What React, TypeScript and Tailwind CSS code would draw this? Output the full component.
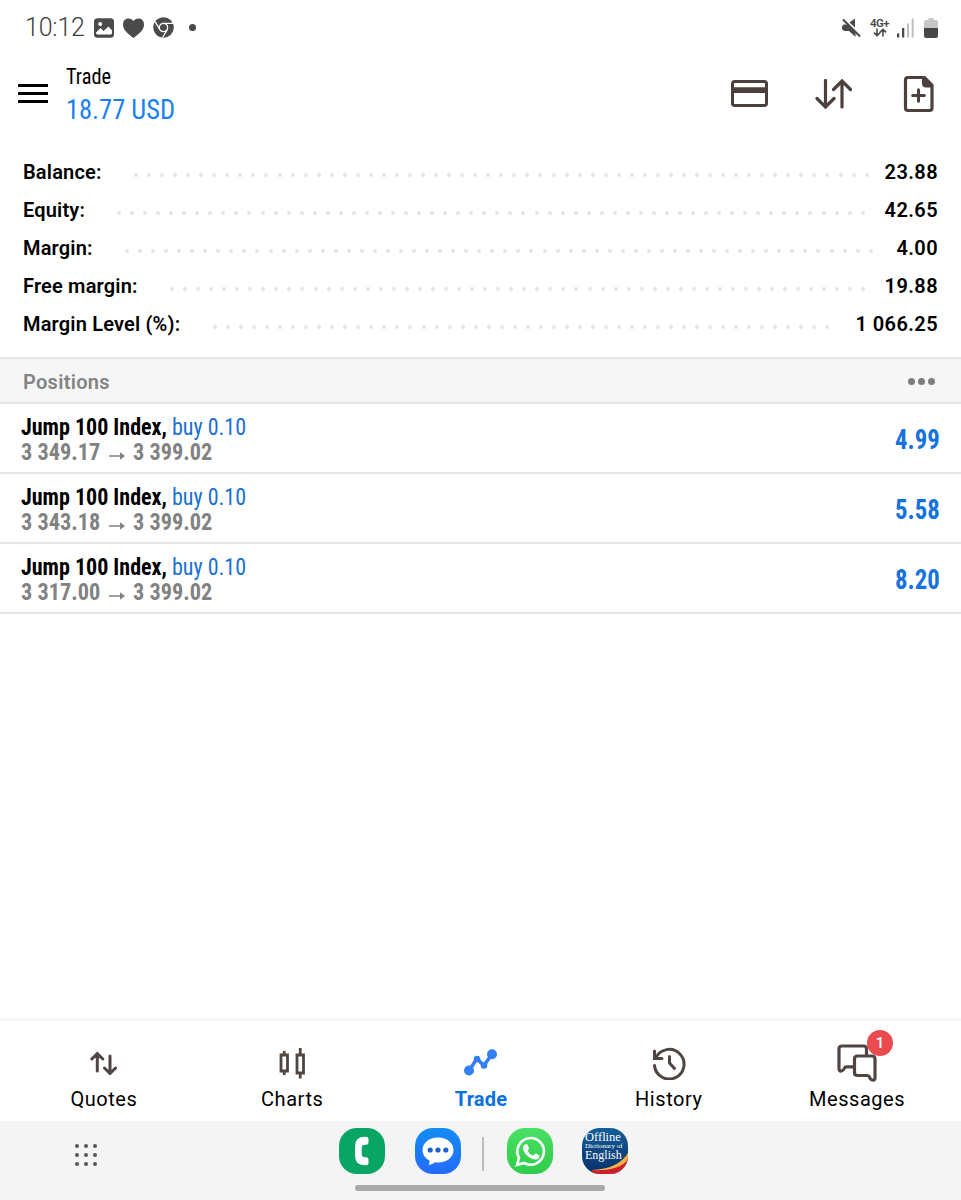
import type { ReactNode } from "react";

const condensed = "[font-family:'Roboto_Condensed',Roboto,sans-serif] [font-stretch:75%]";

const summary = [
  { label: "Balance:", value: "23.88", dots: 57, box: "ml-[134px] w-[735px]" },
  { label: "Equity:", value: "42.65", dots: 58, box: "ml-[117px] w-[748px]" },
  { label: "Margin:", value: "4.00", dots: 58, box: "ml-[125px] w-[748px]" },
  { label: "Free margin:", value: "19.88", dots: 54, box: "ml-[170px] w-[696px]" },
  { label: "Margin Level (%):", value: "1 066.25", dots: 48, box: "ml-[213px] w-[617px]" },
];

const positions = [
  { open: "3 349.17", now: "3 399.02", profit: "4.99" },
  { open: "3 343.18", now: "3 399.02", profit: "5.58" },
  { open: "3 317.00", now: "3 399.02", profit: "8.20" },
];

function StatusBar() {
  return (
    <div className="flex h-14 items-center pr-[23px] pb-px pl-[25px] text-[#4a4a4a]">
      <span className="w-[69px] text-[25px] leading-none font-light tracking-[-0.2px] text-[#404040]">10:12</span>
      <svg className="h-5 w-5" viewBox="0 0 20 20">
        <rect width="20" height="19.5" y=".2" rx="3.5" fill="currentColor" />
        <circle cx="6.2" cy="6" r="2" fill="#fff" />
        <path d="M2 14.500 6.500 10l3 3 5-4.500 3.500 4v2.500q0 1.500-1.500 1.500H4q-2 0-2-1.500Z" fill="#fff" />
      </svg>
      <svg className="ml-[9px] h-5 w-[21px]" viewBox="0 0 21 20">
        <path d="M10.5 3.2C8-1.2 0-.5 0 6.5c0 6.2 6.2 10 10.5 13.5C14.800 16.500 21 12.700 21 6.500c0-7-8-7.700-10.500-3.300Z" fill="currentColor" />
      </svg>
      <svg className="ml-[9px] h-[21px] w-[21px]" viewBox="0 0 21 21">
        <circle cx="10.500" cy="10.500" r="10.300" fill="currentColor" />
        <g fill="none" stroke="#fff" strokeWidth="1.200">
          <circle cx="10.500" cy="10.500" r="4.200" />
          <path d="M10.500 6.300H20M6.800 12.600 2 4.400M14.200 12.600 9.500 20.700" />
        </g>
      </svg>
      <span className="ml-[15px] h-[7px] w-[7px] rounded-full bg-current" />
      <div className="flex-1" />
      <svg className="h-5 w-5" viewBox="0 0 20 20">
        <path d="M1 8.500 2.500 6.500h4L14.500 14.500V19L8 13H3L1 11zM8.500 4.500 14 .5v9z" fill="currentColor" />
        <path d="m2 2.200 16.500 16.500" stroke="#fff" strokeWidth="1.300" transform="translate(1.200 -1.200)" />
        <path d="m2 1.500 17 17" stroke="currentColor" strokeWidth="2.200" />
      </svg>
      <div className="ml-[9px] flex w-[19px] flex-col items-center">
        <span className="text-[11.500px] leading-[10px] font-semibold tracking-[-0.5px]">4G+</span>
        <svg className="h-[9px] w-[14px]" viewBox="0 0 14 9">
          <path d="M4 .5v7M.9 4.600 4 7.600l3.100-3M10 8.500v-7M6.900 4.400 10 1.400l3.100 3" fill="none" stroke="currentColor" strokeWidth="1.600" />
        </svg>
      </div>
      <svg className="ml-2 h-5 w-[17px]" viewBox="0 0 17 20">
        <path d="M0 15.500h2.300v4H0zM5 10h2.300v9.500H5z" fill="currentColor" />
        <path d="M10 5.500h2v14h-2zM14.700.5h2v19h-2z" fill="#bebebe" />
      </svg>
      <svg className="ml-[10px] h-5 w-[14px]" viewBox="0 0 14 20">
        <path d="M4.500 0h5v2H12q2 0 2 2v7H0V4q0-2 2-2h2.500z" fill="#c6c6c6" />
        <path d="M0 10h14v7.500q0 2.500-2.500 2.500h-9Q0 20 0 17.500z" fill="#464646" />
      </svg>
    </div>
  );
}

function Header() {
  return (
    <header className="flex h-[76px] items-center pr-[27px] pl-[18px] text-[#4b403e]">
      <button className="-mt-[2px] flex w-[30px] flex-col gap-[5px]" aria-label="Menu">
        <span className="h-[3px] bg-black" />
        <span className="h-[3px] bg-black" />
        <span className="h-[3px] bg-black" />
      </button>
      <div className={`ml-[17.500px] ${condensed}`}>
        <div className="origin-left scale-x-[0.925] text-[22px] leading-[31px] text-black">Trade</div>
        <div className="origin-left scale-x-[0.945] text-[28px] leading-[35px] text-[#1a7ff0]">18.77 USD</div>
      </div>
      <div className="flex-1" />
      <svg className="h-[28px] w-[37px]" viewBox="0 0 37 28">
        <rect x="1.500" y="1.500" width="34" height="24" rx="2.300" fill="none" stroke="currentColor" strokeWidth="3" />
        <path d="M1 7.200h35v5.800H1z" fill="currentColor" />
      </svg>
      <svg className="ml-[47px] h-[30px] w-[37px]" viewBox="0 0 37 30">
        <path d="M10.500 1.500v26M2 19.500l8.500 8.500 8.500-8.500M27 28V2M18.500 10.500 27 2l8.500 8.500" fill="none" stroke="currentColor" strokeWidth="3.200" strokeLinecap="round" />
      </svg>
      <svg className="ml-[51px] h-[38px] w-[31px]" viewBox="0 0 31 38">
        <path d="M5 2.500h16.500l7.500 7.700V33q0 2.500-2.500 2.500H5Q2.500 35.500 2.500 33V5Q2.500 2.500 5 2.500Z" fill="none" stroke="currentColor" strokeWidth="3.200" />
        <path d="M19 2v6.500q0 4 4 4h6.500V9.500l-7.500-7.500z" fill="currentColor" />
        <path d="M15.500 14.800v11.400M9.700 20.500h11.600" stroke="currentColor" strokeWidth="3" strokeLinecap="round" />
      </svg>
    </header>
  );
}

function Summary() {
  return (
    <section className="mt-[21px] h-[204px] text-[20px] text-black">
      {summary.map((row) => (
        <div key={row.label} className="flex h-[38px] items-center pr-[23px]">
          <span className="-mr-[23px] w-0 pl-[23px] font-semibold tracking-[0.170px] whitespace-nowrap">{row.label}</span>
          <span className={`flex shrink-0 translate-y-[3px] justify-between ${row.box}`}>
            {Array.from({ length: row.dots }, (_, i) => (
              <i key={i} className="h-1 w-1 rounded-full bg-[#e4e4e4]" />
            ))}
          </span>
          <span className="flex-1 text-right font-semibold tracking-[0.4px] whitespace-nowrap">{row.value}</span>
        </div>
      ))}
    </section>
  );
}

function Positions() {
  return (
    <section>
      <div className="flex h-[47px] items-center justify-between border-t-2 border-b-2 border-[#e6e6e6] bg-[#f6f6f6] pt-[3px] pr-[26px] pl-[23px]">
        <span className="text-[20px] font-semibold tracking-[0.3px] text-[#838383]">Positions</span>
        <span className="-mt-[2px] flex gap-[3px]">
          <i className="h-[7px] w-[7px] rounded-full bg-[#7d7d7d]" />
          <i className="h-[7px] w-[7px] rounded-full bg-[#7d7d7d]" />
          <i className="h-[7px] w-[7px] rounded-full bg-[#7d7d7d]" />
        </span>
      </div>
      {positions.map((p) => (
        <div key={p.open} className={`flex h-[70px] items-center justify-between border-b-2 border-[#e6e6e6] pt-[4px] pr-[21px] pl-[21px] ${condensed}`}>
          <div className="text-[23px] leading-[26px]">
            <div className="origin-left scale-x-[0.957] pt-px font-bold text-black">
              Jump 100 Index, <span className="font-normal text-[#1870d5]">buy 0.10</span>
            </div>
            <div className="-mt-px mb-px flex font-bold text-[#828282]">
              <span className="w-[88px] origin-left scale-x-[0.970]">{p.open}</span>
              <svg className="mt-[12px] mr-2 h-2 w-4" viewBox="0 0 16 8">
                <path d="M0 4h13" stroke="currentColor" strokeWidth="1.500" />
                <path d="m11 .3 5 3.700-5 3.700z" fill="currentColor" />
              </svg>
              <span className="origin-left scale-x-[0.970]">{p.now}</span>
            </div>
          </div>
          <span className="origin-right scale-x-[0.917] text-[27px] font-bold text-[#1672dc]">{p.profit}</span>
        </div>
      ))}
    </section>
  );
}

function Tab({ label, active = false, children }: { label: string; active?: boolean; children: ReactNode }) {
  return (
    <button className="flex w-[188.300px] flex-col items-center">
      <span className="relative flex h-[61px] items-center pt-[22px]">{children}</span>
      <span className={`mt-[2px] text-[20px] leading-[30px] ${active ? "pl-px font-bold tracking-[0.200px] text-[#0b6fe4]" : "tracking-[0.550px] text-black"}`}>
        {label}
      </span>
    </button>
  );
}

function TabBar() {
  return (
    <nav className="flex h-[103px] justify-center border-t-[3px] border-[#f6f6f6] text-[#4f4644]">
      <Tab label="Quotes">
        <svg className="h-6 w-[27px]" viewBox="0 0 27 24">
          <path d="M7.300 20V2.500M1.800 8l5.500-5.500L12.800 8M20 5v17M14.500 17l5.500 5.500 5.500-5.500" fill="none" stroke="currentColor" strokeWidth="3" strokeLinecap="round" />
        </svg>
      </Tab>
      <Tab label="Charts">
        <svg className="h-8 w-[27px]" viewBox="0 0 27 32">
          <g fill="none" stroke="currentColor" strokeWidth="2.800">
            <path d="M2 8h6.500v16H2zM5.250 4v4M5.250 24v4M18 8h6.500v18H18zM21.250 1v7M21.250 26v5.500" />
          </g>
        </svg>
      </Tab>
      <Tab label="Trade" active>
        <svg className="h-[27px] w-[33px] text-[#357ff5]" viewBox="0 0 33 27">
          <path d="m5 21.500 8-11.800 7 6.800 8-11.500" fill="none" stroke="currentColor" strokeWidth="3.600" />
          <g fill="currentColor">
            <circle cx="5" cy="21.500" r="5" />
            <circle cx="13" cy="10" r="3.300" />
            <circle cx="20" cy="16.500" r="3.300" />
            <circle cx="28" cy="5.200" r="5" />
          </g>
        </svg>
      </Tab>
      <Tab label="History">
        <svg className="h-[34px] w-[34px]" viewBox="0 0 34 34">
          <path d="M3.800 12A14.800 14.800 0 1 1 2.500 19.500M2.500 5v7.500H10M17.500 10.500V17l5 5.500" fill="none" stroke="currentColor" strokeWidth="3" strokeLinecap="round" />
        </svg>
      </Tab>
      <Tab label="Messages">
        <svg className="h-[38px] w-[40px]" viewBox="0 0 40 38">
          <g fill="none" stroke="currentColor" strokeWidth="3.200" strokeLinejoin="round">
            <path d="M29.500 11.500V5q0-3-3-3H5Q2 2 2 5v19.500q0 3 2.500 2.500 2-.5 3-3 .5-1.200 2-1.200h8" />
            <path d="M20.500 12H35q3 0 3 3v19q0 2.500-2.500 2-2.500-.5-3-3-.5-1.500-2-1.500h-10q-3 0-3-3V15q0-3 3-3Z" />
          </g>
        </svg>
        <span className="absolute top-[9px] left-[30px] flex h-[26px] w-[26px] items-center justify-center rounded-full bg-[#ea4b4e] text-[15px] leading-none font-medium text-white">1</span>
      </Tab>
    </nav>
  );
}

function Dock() {
  return (
    <footer className="h-[79px] bg-[#f4f4f4]">
      <div className="flex h-[60px] items-center">
        <div className="ml-[75px] grid grid-cols-3 gap-[5px] pt-[7px]">
          {Array.from({ length: 9 }, (_, i) => (
            <i key={i} className="h-1 w-1 rounded-full bg-[#555]" />
          ))}
        </div>
        <div className="ml-[242px] flex h-[46px] w-[46px] items-center justify-center rounded-[18px] bg-[#08a564]">
          <svg className="h-[30px] w-4" viewBox="0 0 16 30">
            <path d="M10.500.8H12Q14.500.8 14.500 3v3.500q0 2.200-2.500 2.200h-1Q7.700 8.700 7.700 12v6q0 3.300 3.300 3.300h1q2.500 0 2.500 2.200V27q0 2.200-2.500 2.200h-1.500Q1 29.200 1 19.500v-9Q1 .8 10.500.8Z" fill="#fff" />
          </svg>
        </div>
        <div className="ml-[30px] flex h-[46px] w-[46px] items-center justify-center rounded-[18px] bg-linear-to-b from-[#148cf3] to-[#236bfb]">
          <svg className="h-[30px] w-8" viewBox="0 0 32 30">
            <path d="M16 1.500c9 0 15.500 5.500 15.500 12.500S25 26.500 16 26.500q-1.500 0-3-.2Q10 29 6.500 29q1.200-1.800 1-4.500Q.5 21 .5 14C.5 7 7 1.500 16 1.500Z" fill="#fff" />
            <g fill="#205fd0">
              <circle cx="8.200" cy="14" r="2.600" />
              <circle cx="16" cy="14" r="2.600" />
              <circle cx="23.800" cy="14" r="2.600" />
            </g>
          </svg>
        </div>
        <span className="mt-[6px] ml-[21px] h-[34px] w-[2px] bg-[#bcbcbc]" />
        <div className="ml-[23px] flex h-[46px] w-[46px] items-center justify-center rounded-[18px] bg-linear-to-b from-[#49e064] to-[#2fcc4a]">
          <svg className="h-[31px] w-[31px]" viewBox="0 0 31 31">
            <path d="M2 29 4 21.800A13.300 13.300 0 1 1 9.200 27z" fill="none" stroke="#fff" strokeWidth="2.600" />
            <path d="M10.500 8.300h1.200q.7 0 1 .7l1.200 2.900q.3.700-.2 1.300l-1.200 1.500q2 3.600 5.800 5l1.500-1.800q.5-.6 1.200-.3l2.900 1.400q.6.300.6.900 0 3-3.700 3.600c-5.500.2-12.700-6.300-12.700-11.500 0-2 1.200-3.700 2.400-3.700Z" fill="#fff" />
          </svg>
        </div>
        <div className="relative ml-[29px] h-[46px] w-[46px] overflow-hidden rounded-[18px] bg-linear-to-b from-[#155f98] to-[#092f68]">
          <svg className="absolute inset-0 h-[46px] w-[46px]" viewBox="0 0 46 46">
            <path d="M10 42Q36 41 46 25v21H10z" fill="#fbb04a" />
            <path d="M10 42Q38 43.500 46 31v15H10z" fill="#c8202c" />
          </svg>
          <div className="relative pt-[3px] pl-[3px] whitespace-nowrap text-white [font-family:'Liberation_Serif',serif]">
            <div className="text-[12.500px] leading-[12px]">Offline</div>
            <div className="text-[7px] leading-[7px]">Dictionary of</div>
            <div className="text-[12px] leading-[10px]">English</div>
          </div>
        </div>
      </div>
      <div className="mt-[4px] ml-[355px] h-[6px] w-[250px] rounded-full bg-[#a9a9a9]" />
    </footer>
  );
}

export default function App() {
  return (
    <div className="flex h-[1200px] w-[961px] flex-col overflow-hidden bg-white [font-family:Roboto,sans-serif]">
      <StatusBar />
      <Header />
      <Summary />
      <Positions />
      <div className="flex-1" />
      <TabBar />
      <Dock />
    </div>
  );
}
